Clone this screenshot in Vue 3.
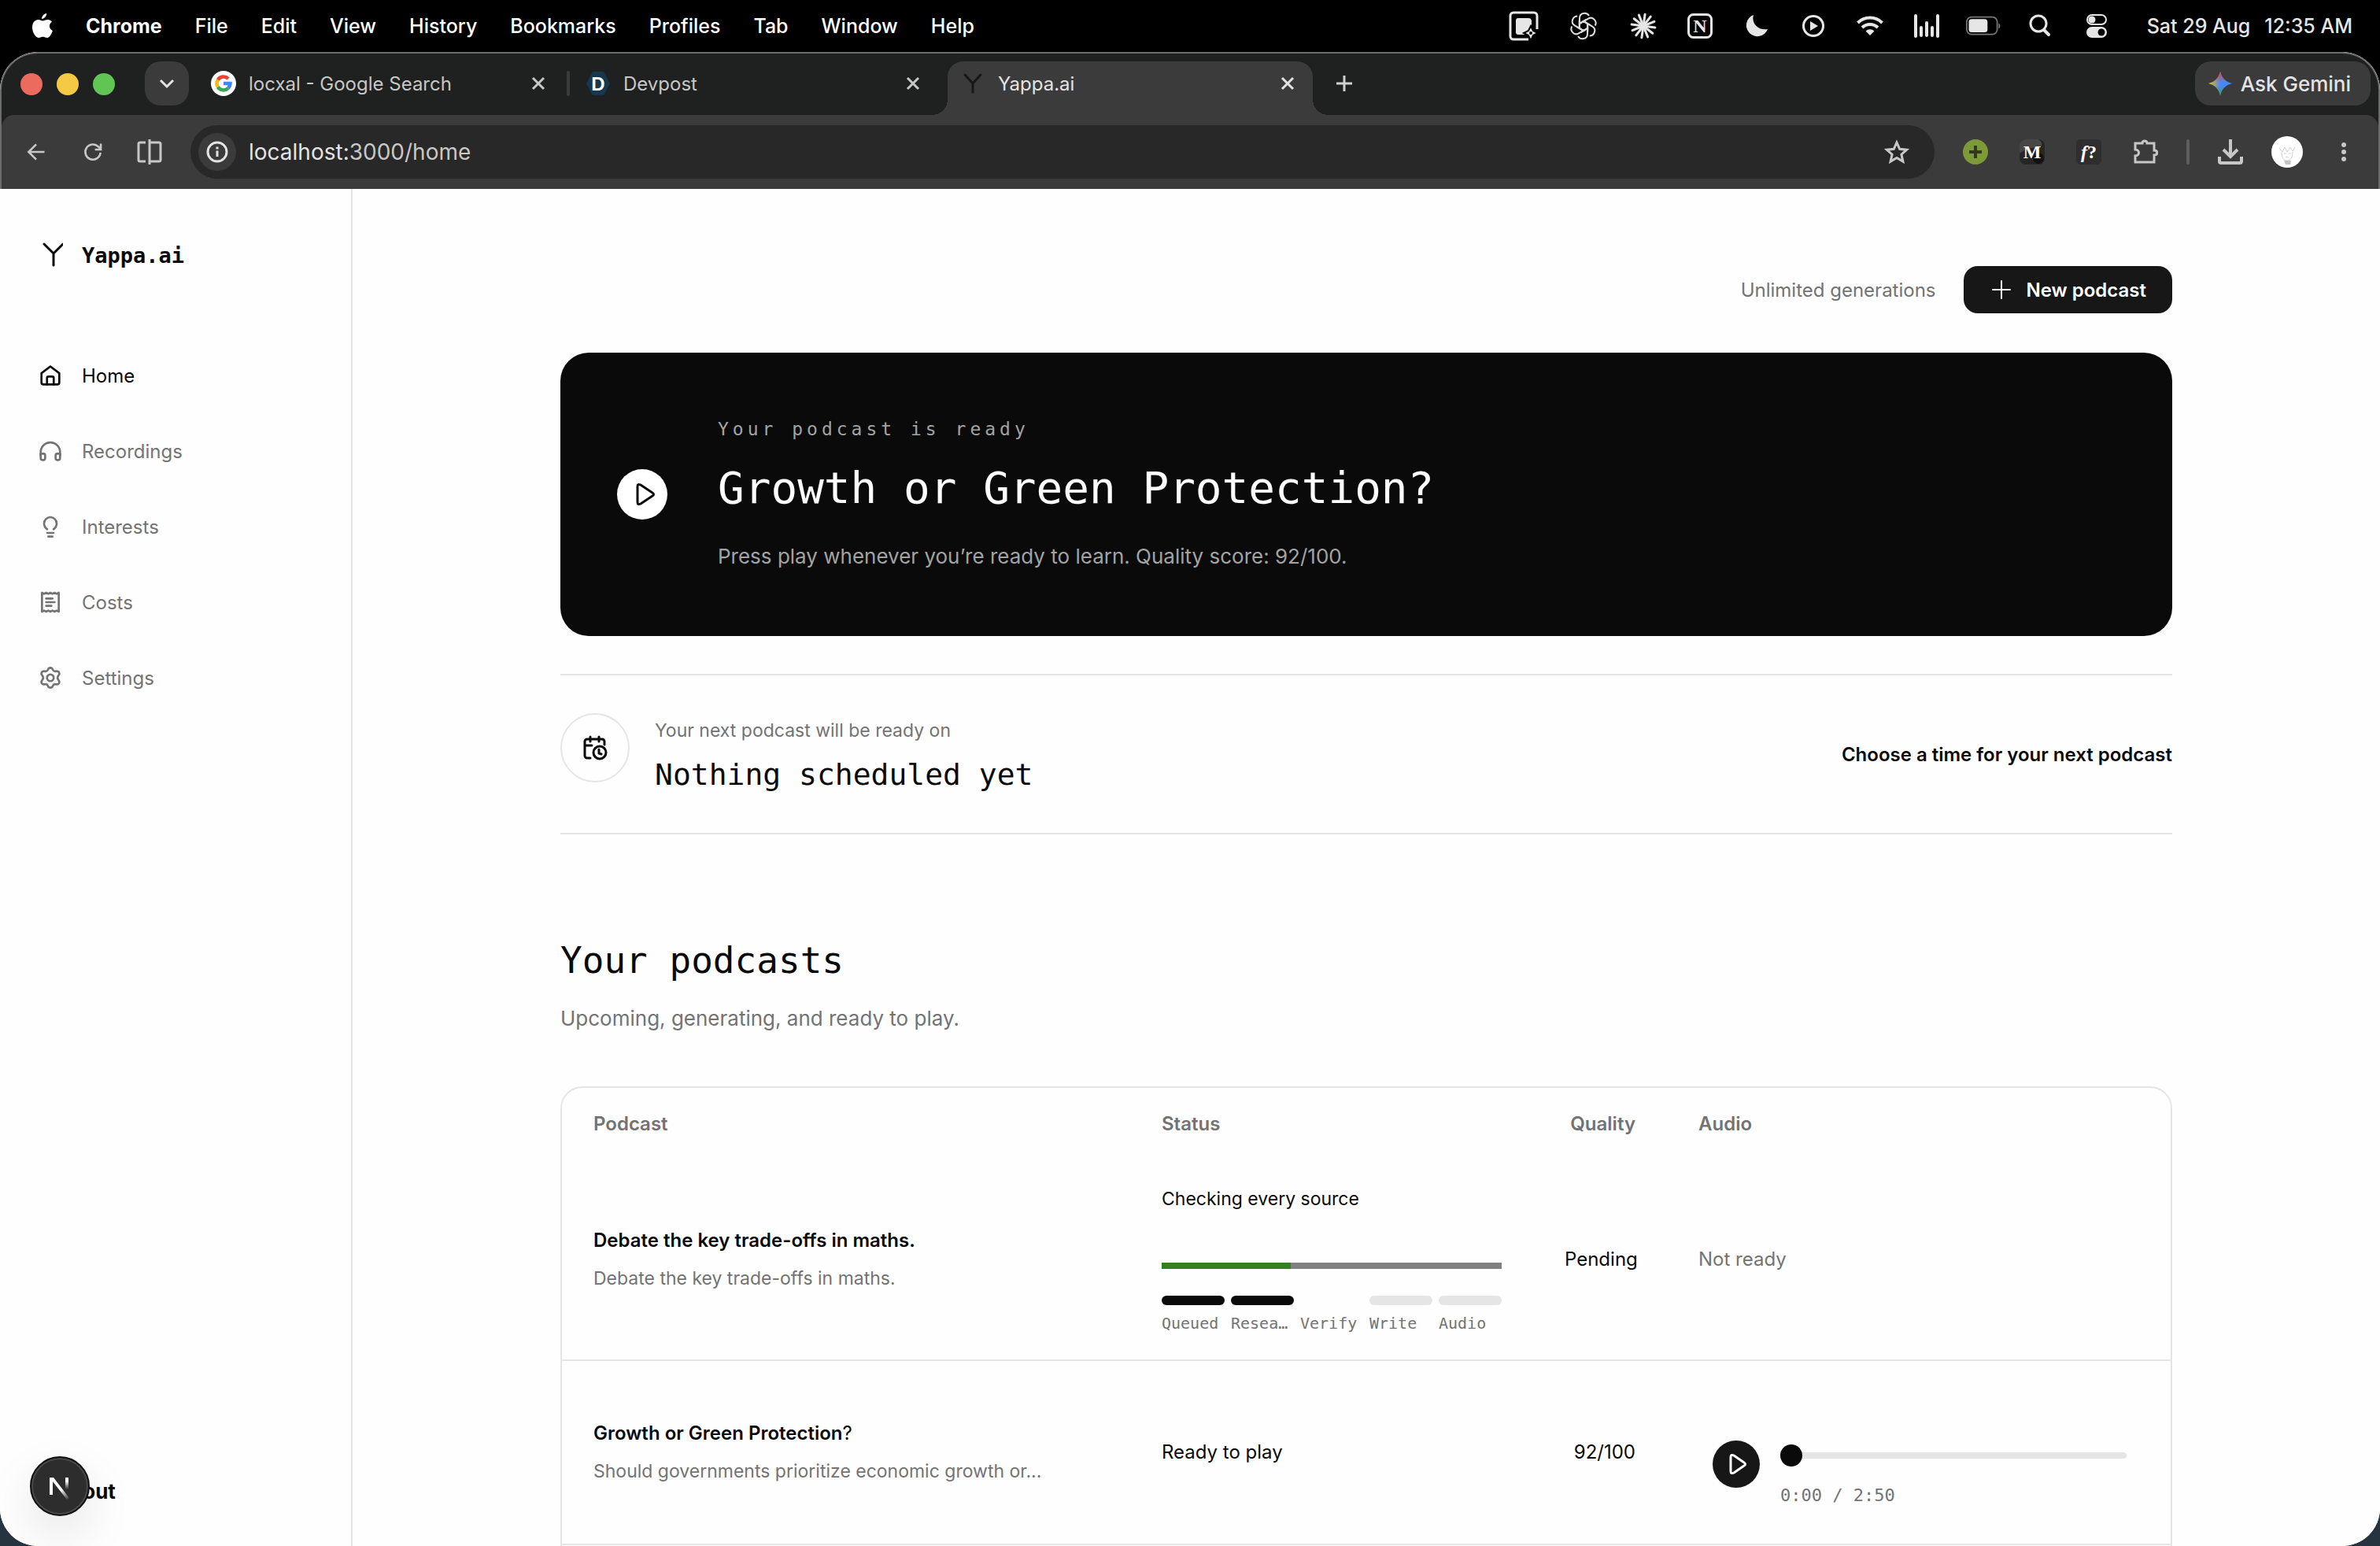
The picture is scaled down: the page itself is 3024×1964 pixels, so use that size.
<script setup>
import { ref } from 'vue'

const menus = ['File', 'Edit', 'View', 'History', 'Bookmarks', 'Profiles', 'Tab', 'Window', 'Help']

const links = [
  { name: 'Home', active: true, paths: ['M3.5 9.8 12 3.4l8.500 6.400V18.500a2 2 0 0 1-2 2h-13a2 2 0 0 1-2-2Z', 'M8.800 20.500v-6a1.500 1.500 0 0 1 1.500-1.500h3.400a1.500 1.500 0 0 1 1.500 1.500v6'] },
  { name: 'Recordings', paths: ['M2.800 17v-4a9.200 9.200 0 0 1 18.400 0v4', 'M2.800 14.500h2.700a1.500 1.500 0 0 1 1.500 1.500v3a1.500 1.500 0 0 1-1.500 1.500H4.300a1.500 1.500 0 0 1-1.500-1.500Z', 'M21.200 14.500h-2.700a1.500 1.500 0 0 0-1.500 1.500v3a1.500 1.500 0 0 0 1.500 1.500h1.200a1.500 1.500 0 0 0 1.500-1.500Z'] },
  { name: 'Interests', paths: ['M9 14.500C7.200 13.200 6 11.200 6 9a6 6 0 0 1 12 0c0 2.200-1.200 4.200-3 5.500', 'M9 18h6', 'M10 21.500h4'] },
  { name: 'Costs', paths: ['M4 3l2 1 2-1 2 1 2-1 2 1 2-1 2 1 2-1v18l-2-1-2 1-2-1-2 1-2-1-2 1-2-1-2 1Z', 'M8 8.500h6', 'M8 12h8', 'M8 15.500h5'] },
  { name: 'Settings', paths: ['M12 2.500c1.600 0 2 .7 2.400 1.900.4 1.100 1.500 1.700 2.700 1.400 1.300-.3 2.300-.3 3.100 1 .8 1.400.4 2.100-.5 3.100a3 3 0 0 0 0 4.200c.9 1 1.300 1.700.5 3.100-.8 1.300-1.800 1.300-3.100 1-1.200-.3-2.300.3-2.700 1.400-.4 1.200-.8 1.900-2.400 1.900s-2-.7-2.400-1.900c-.4-1.100-1.500-1.700-2.700-1.400-1.300.3-2.300.3-3.100-1-.8-1.400-.4-2.100.5-3.100a3 3 0 0 0 0-4.200c-.9-1-1.300-1.700-.5-3.100.8-1.300 1.800-1.300 3.100-1 1.200.3 2.300-.3 2.700-1.400.4-1.200.8-1.900 2.400-1.900Z', 'M8.800 12a3.200 3.200 0 1 0 6.400 0a3.200 3.200 0 1 0-6.400 0'] },
]

const steps = [
  { label: 'Queued', state: 'done' },
  { label: 'Resea…', state: 'done' },
  { label: 'Verify', state: 'current' },
  { label: 'Write', state: 'todo' },
  { label: 'Audio', state: 'todo' },
]

const position = ref(0)
const rays = Array.from({ length: 12 }, (_, i) => i * 30 + 8)
</script>

<template>
  <div class="desktop">
    <div class="menubar">
      <svg class="apple" viewBox="0 0 26 32" aria-hidden="true"><path fill="#fff" d="M18.200 0c.2 3.400-2.900 7-6 6.900C11.800 3.700 15 .3 18.200 0ZM25 10.800c-4.600 2.800-3.800 9.300.9 11.200-1.300 3.900-4 8.900-6.700 9-2.300.1-3-1.300-5.700-1.300S10 31 7.900 31C4 31 0 23.800 0 17.600 0 11.400 3.800 8 7.600 8c2.400 0 4.300 1.500 5.800 1.500S17.300 7.800 20 8c1.700.1 3.700.9 5 2.800Z"/></svg>
      <strong>Chrome</strong>
      <span v-for="m in menus" :key="m">{{ m }}</span>
      <div class="tray">
        <svg class="spaced" viewBox="0 0 44 44"><path fill="none" stroke="#e6e6e6" stroke-width="3" d="M28 39H9a4 4 0 0 1-4-4V9a4 4 0 0 1 4-4h26a4 4 0 0 1 4 4v17"/><path fill="#e6e6e6" d="M15 12h13a4 4 0 0 1 4 4v7l-9 10h-8a3 3 0 0 1-3-3V15a3 3 0 0 1 3-3Z"/><path fill="#e6e6e6" stroke="#000" stroke-width="2" d="m31 22 3 6 6 3-6 3-3 7-3-7-6-3 6-3Z"/><circle cx="31" cy="31" r="2" /></svg>
        <svg class="spaced" viewBox="0 0 44 44"><g fill="none" stroke="#dedede" stroke-width="2"><path v-for="a in 6" :key="a" :transform="`rotate(${a * 60} 22 22)`" d="M17 25V12c0-7 9-8 12-3M17 19l5-3 9 5"/></g></svg>
        <svg viewBox="0 0 44 44"><g stroke="#e6e6e6" stroke-width="3" stroke-linecap="round"><path v-for="r in rays" :key="r" :transform="`rotate(${r} 22 22)`" d="M22 22V7"/></g></svg>
        <svg viewBox="0 0 44 44"><rect x="7.500" y="7.500" width="29" height="29" rx="6" fill="none" stroke="#e6e6e6" stroke-width="3"/><text x="22" y="30" text-anchor="middle" class="slab">N</text></svg>
        <svg viewBox="0 0 44 44"><path fill="#e6e6e6" d="M18 8c-3 10 5 20 18 18a14 14 0 1 1-18-18Z"/></svg>
        <svg viewBox="0 0 44 44"><circle cx="22" cy="22" r="12.500" fill="none" stroke="#e6e6e6" stroke-width="3"/><path fill="#e6e6e6" d="m18 16 10 6-10 6Z"/></svg>
        <svg viewBox="0 0 44 44"><g fill="none" stroke="#e6e6e6" stroke-width="4"><path d="M6.500 18a22 22 0 0 1 31 0M12 24a14.500 14.500 0 0 1 20 0"/></g><path fill="#e6e6e6" d="M16.500 28.500a8 8 0 0 1 11 0L22 34Z"/></svg>
        <svg viewBox="0 0 44 44"><path stroke="#e6e6e6" stroke-width="4" stroke-linecap="round" d="M8 9v26M15 24v10M22 18v16M29 24v10M36 9v26"/></svg>
        <svg viewBox="0 0 50 44"><rect x="1" y="9" width="44" height="25" rx="7" fill="none" stroke="#777" stroke-width="2"/><rect x="4" y="12" width="27" height="19" rx="4" fill="#e6e6e6"/><path fill="#777" d="M47 18c3 1 3 7 0 8Z"/></svg>
        <svg viewBox="0 0 44 44"><circle cx="20" cy="19" r="10" fill="none" stroke="#e6e6e6" stroke-width="3"/><path stroke="#e6e6e6" stroke-width="4" stroke-linecap="round" d="m27 27 6 6"/></svg>
        <svg viewBox="0 0 44 44"><rect x="10" y="8" width="24" height="12" rx="6" fill="none" stroke="#e6e6e6" stroke-width="2"/><circle cx="16" cy="14" r="4.500" fill="#e6e6e6"/><rect x="9" y="23" width="26" height="14" rx="7" fill="#e6e6e6"/><circle cx="28" cy="30" r="4.500"/></svg>
      </div>
      <time class="clock"><span>Sat 29 Aug</span><span>12:35 AM</span></time>
    </div>

    <div class="window">
      <header class="chrome">
        <div class="tabstrip">
          <div class="lights"><i class="red"></i><i class="amber"></i><i class="green"></i></div>
          <button class="tabsearch" aria-label="Search tabs"><svg width="20" height="20" viewBox="0 0 20 20"><path fill="none" stroke="#e3e3e3" stroke-width="3" d="m2 6 8 8 8-8"/></svg></button>
          <div class="tab">
            <svg width="32" height="32" viewBox="0 0 32 32"><circle cx="16" cy="16" r="16" fill="#fff"/><g fill="none" stroke-width="4.500"><path stroke="#ea4335" d="M8.800 11.500a8.500 8.500 0 0 1 13.200-1.500"/><path stroke="#fbbc05" d="M8.800 11.500a8.500 8.500 0 0 0 0 9"/><path stroke="#34a853" d="M8.800 20.500a8.500 8.500 0 0 0 13 1.600"/><path stroke="#4285f4" d="M21.800 22.100A8.500 8.500 0 0 0 24.500 16H16"/></g></svg>
            <span class="title">locxal - Google Search</span>
            <button class="close" aria-label="Close tab"><svg width="18" height="18" viewBox="0 0 18 18"><path stroke="currentColor" stroke-width="3" d="m2 2 14 14M16 2 2 16"/></svg></button>
          </div>
          <i class="sep"></i>
          <div class="tab">
            <svg width="32" height="32" viewBox="0 0 32 32"><path fill="#15384f" d="M9 1h14l8 15-8 15H9L1 16Z"/><text x="16" y="25" text-anchor="middle" class="dev">D</text></svg>
            <span class="title">Devpost</span>
            <button class="close" aria-label="Close tab"><svg width="18" height="18" viewBox="0 0 18 18"><path stroke="currentColor" stroke-width="3" d="m2 2 14 14M16 2 2 16"/></svg></button>
          </div>
          <div class="tab active">
            <svg width="32" height="32" viewBox="0 0 32 32"><path fill="none" stroke="#171717" stroke-width="3" stroke-linecap="round" d="m6 5 10 11L26 5M16 16v11"/></svg>
            <span class="title">Yappa.ai</span>
            <button class="close" aria-label="Close tab"><svg width="18" height="18" viewBox="0 0 18 18"><path stroke="currentColor" stroke-width="3" d="m2 2 14 14M16 2 2 16"/></svg></button>
          </div>
          <button class="newtab" aria-label="New tab"><svg width="22" height="22" viewBox="0 0 22 22"><path stroke="#d0d0d0" stroke-width="3" d="M11 1v20M1 11h20"/></svg></button>
          <button class="gemini">
            <svg width="30" height="30" viewBox="0 0 30 30"><defs>
              <linearGradient id="gemA" x1="0" y1="0.500" x2="1" y2="0.500"><stop offset="0" stop-color="#fbbc05"/><stop offset=".5" stop-color="#4b86f6"/><stop offset="1" stop-color="#4285f4"/></linearGradient>
              <linearGradient id="gemB" x1="0" y1="0" x2="0" y2="1"><stop offset="0" stop-color="#ea4335"/><stop offset=".45" stop-color="#ea4335" stop-opacity="0"/><stop offset=".6" stop-color="#34a853" stop-opacity="0"/><stop offset="1" stop-color="#34a853"/></linearGradient></defs>
              <path fill="url(#gemA)" d="M15 0c2 8 7 13 15 15-8 2-13 7-15 15C13 22 8 17 0 15 8 13 13 8 15 0Z"/><path fill="url(#gemB)" d="M15 0c2 8 7 13 15 15-8 2-13 7-15 15C13 22 8 17 0 15 8 13 13 8 15 0Z"/></svg>
            Ask Gemini
          </button>
        </div>

        <div class="toolbar">
          <button class="tool" aria-label="Back"><svg viewBox="0 0 32 32"><path d="M28 16H5M16 5 5 16l11 11"/></svg></button>
          <button class="tool" aria-label="Reload"><svg viewBox="0 0 32 32"><path d="M27 17a11 11 0 1 1-3-8.500l3 3M27.500 4v8.500H19"/></svg></button>
          <button class="tool" aria-label="Split view"><svg viewBox="0 0 32 32"><path d="M11 4H4a2 2 0 0 0-2 2v20a2 2 0 0 0 2 2h7M16 0v32M16 4h12a2 2 0 0 1 2 2v20a2 2 0 0 1-2 2H16"/></svg></button>
          <div class="omnibox">
            <span class="info"><svg width="28" height="28" viewBox="0 0 28 28"><circle cx="14" cy="14" r="12" fill="none" stroke="#e3e3e3" stroke-width="3"/><path stroke="#e3e3e3" stroke-width="3" d="M14 12.500V20M14 7.500v3"/></svg></span>
            <a href="#" class="url"><b>localhost:</b>3000/home</a>
            <button class="tool" aria-label="Bookmark"><svg viewBox="0 0 32 32"><path d="m16 4 3.700 8.300 9 .9-6.800 6 2 8.900L16 23.500l-7.900 4.600 2-8.900-6.800-6 9-.9Z"/></svg></button>
          </div>
          <button class="tool" aria-label="Add extension"><svg viewBox="0 0 32 32"><circle cx="16" cy="16" r="16" fill="#7c9b38" stroke="none"/><path stroke="#33391f" stroke-width="4" d="M16 8v16M8 16h16"/></svg></button>
          <button class="tool" aria-label="M extension"><svg viewBox="0 0 32 32"><rect width="32" height="32" rx="8" fill="#262626" stroke="none"/><path fill="#474747" stroke="none" d="M8 0h16c6 4 5 8 1 12-9-3-17 0-25 6V8a8 8 0 0 1 8-8Z"/><circle cx="24" cy="24" r="7" fill="#121212" stroke="none"/><text x="16" y="24" text-anchor="middle" class="slab white">M</text></svg></button>
          <button class="tool" aria-label="Font finder"><svg viewBox="0 0 32 32"><rect width="32" height="32" rx="5" fill="#2e2e2e" stroke="none"/><text x="16" y="24" text-anchor="middle" class="slab white"><tspan font-style="italic">f</tspan>?</text></svg></button>
          <button class="tool" aria-label="Extensions"><svg viewBox="0 0 32 32"><path d="M3 5h9c0-4 6-4 6 0h9v9c5 0 5 6 0 6v9H3v-8c6 0 6-8 0-8Z"/></svg></button>
          <i class="bar"></i>
          <button class="tool" aria-label="Downloads"><svg viewBox="0 0 32 32"><path stroke-width="4" d="M16 0v22M7 13l9 9 9-9M2 22v6a2 2 0 0 0 2 2h24a2 2 0 0 0 2-2v-6"/></svg></button>
          <button class="tool" aria-label="Profile"><svg class="avatar" viewBox="0 0 40 40"><circle cx="20" cy="20" r="20" fill="#fff" stroke="none"/><path stroke="#cfcfcf" stroke-width="1" d="m10 15 4 5 3-6 3 6 4-6 3 5 3-5M13 20c0 8 3 11 7 11s7-3 7-11M16 22h3M22 22h3M18 27l2-1 2 1"/><path fill="#c4c4c4" stroke="none" d="M16 31h9l-1 5h-6Z"/></svg></button>
          <button class="tool" aria-label="Menu"><svg viewBox="0 0 32 32"><g fill="#c7c7c7" stroke="none"><circle cx="16" cy="7" r="3"/><circle cx="16" cy="16" r="3"/><circle cx="16" cy="25" r="3"/></g></svg></button>
        </div>
      </header>

      <div class="app">
        <aside class="sidebar">
          <a href="#" class="brand">
            <svg width="32" height="32" viewBox="0 0 32 32"><path fill="none" stroke="#0a0a0a" stroke-width="3" stroke-linecap="round" d="m8 2 12 12L32 2M20 14v15"/></svg>
            Yappa.ai
          </a>
          <nav>
            <a v-for="l in links" :key="l.name" href="#" :class="{ on: l.active }">
              <svg width="32" height="32" viewBox="0 0 24 24"><path v-for="p in l.paths" :key="p" :d="p"/></svg>
              {{ l.name }}
            </a>
          </nav>
          <button class="logout">Log out</button>
          <button class="devtools" aria-label="Open Next.js dev tools">
            <svg width="76" height="76" viewBox="0 0 76 76"><defs>
              <linearGradient id="nA" x1="0" y1="0" x2="0" y2="1"><stop offset=".3" stop-color="#fff"/><stop offset="1" stop-color="#fff" stop-opacity="0"/></linearGradient>
              <linearGradient id="nB" gradientUnits="userSpaceOnUse" x1="40" y1="42" x2="50" y2="55"><stop offset="0" stop-color="#fff"/><stop offset="1" stop-color="#fff" stop-opacity="0"/></linearGradient></defs>
              <path fill="#fff" d="M25 27h4v22h-4Z"/><path fill="url(#nB)" d="M25 27h5l20 26-3 2Z"/><path fill="url(#nA)" d="M45 27h4v15h-4Z"/></svg>
          </button>
        </aside>

        <main>
          <div class="wrap">
            <div class="actions">
              <span>Unlimited generations</span>
              <button class="new"><svg width="24" height="24" viewBox="0 0 24 24"><path stroke="#fff" stroke-width="2" stroke-linecap="round" d="M12 1v22M1 12h22"/></svg>New podcast</button>
            </div>

            <section class="hero">
              <button class="heroplay" aria-label="Play podcast"><svg width="32" height="32" viewBox="0 0 32 32"><path fill="none" stroke="#0a0a0a" stroke-width="3" stroke-linejoin="round" d="M9 6c0-3 2-3 4-2l15 10c2 1 2 3 0 4L13 28c-2 1-4 1-4-2Z"/></svg></button>
              <div>
                <p class="eyebrow">Your podcast is ready</p>
                <h1>Growth or Green Protection?</h1>
                <p class="lead">Press play whenever you’re ready to learn. Quality score: 92/100.</p>
              </div>
            </section>

            <section class="schedule">
              <span class="cal"><svg width="32" height="32" viewBox="0 0 32 32"><g fill="none" stroke="#0a0a0a" stroke-width="3" stroke-linecap="round" stroke-linejoin="round"><path d="M10 29H6a3 3 0 0 1-3-3V8a3 3 0 0 1 3-3h19a3 3 0 0 1 3 3v4M3 13h9M10 2v6M21 2v6"/><circle cx="22" cy="22" r="8"/><path d="M21 18v5l3 1"/></g></svg></span>
              <div class="when">
                <p>Your next podcast will be ready on</p>
                <h2>Nothing scheduled yet</h2>
              </div>
              <a href="#">Choose a time for your next podcast</a>
            </section>

            <h2 class="heading">Your podcasts</h2>
            <p class="sub">Upcoming, generating, and ready to play.</p>

            <div class="card">
              <table>
                <colgroup><col><col class="c-status"><col class="c-quality"><col class="c-audio"></colgroup>
                <thead><tr><th>Podcast</th><th>Status</th><th class="right">Quality</th><th>Audio</th></tr></thead>
                <tbody>
                  <tr class="generating">
                    <td><strong>Debate the key trade-offs in maths.</strong><p>Debate the key trade-offs in maths.</p></td>
                    <td>
                      <label class="state" for="build">Checking every source</label>
                      <progress id="build" value="38" max="100"></progress>
                      <ol class="steps"><li v-for="s in steps" :key="s.label" :class="s.state">{{ s.label }}</li></ol>
                    </td>
                    <td class="right">Pending</td>
                    <td class="muted">Not ready</td>
                  </tr>
                  <tr class="ready">
                    <td><strong>Growth or Green Protection</strong>?<p>Should governments prioritize economic growth or...</p></td>
                    <td>Ready to play</td>
                    <td class="right">92/100</td>
                    <td>
                      <div class="player">
                        <button class="play" aria-label="Play"><svg width="32" height="32" viewBox="0 0 32 32"><path fill="none" stroke="#fff" stroke-width="3" stroke-linejoin="round" d="M8 7c0-3 2-3 4-2l13 9c2 1 2 3 0 4l-13 9c-2 1-4 1-4-2Z"/></svg></button>
                        <div class="track">
                          <input v-model="position" type="range" min="0" max="170" aria-label="Playback position">
                          <span>0:00 / 2:50</span>
                        </div>
                      </div>
                    </td>
                  </tr>
                </tbody>
              </table>
            </div>
          </div>
        </main>
      </div>
    </div>
  </div>
</template>

<style>
html, body { margin: 0; background: #26343f; }
</style>

<style scoped>
* { box-sizing: border-box; }
.desktop { height: 100vh; overflow: hidden; display: flex; flex-direction: column; background: linear-gradient(#000 50%, #26343f 50%); font-family: Inter, "Liberation Sans", sans-serif; font-size: 24px; color: #0a0a0a; }
button { font: inherit; border: 0; padding: 0; background: none; color: inherit; display: flex; align-items: center; justify-content: center; }
a { color: inherit; text-decoration: none; }
p, h1, h2, ol { margin: 0; }
svg { display: block; flex: none; }

.menubar { flex: none; height: 66px; padding: 0 35px 0 41px; display: flex; align-items: center; gap: 42px; color: #fff; font-size: 25px; font-weight: 500; background: #000; white-space: nowrap; }
.menubar strong { font-weight: 700; }
.apple { width: 26px; height: 32px; }
.tray { margin-left: auto; display: flex; gap: 28px; }
.tray svg { width: 44px; height: 44px; }
.tray .spaced { margin-right: 4px; }
.clock { display: flex; gap: 18px; color: #e6e6e6; }
.slab { font: bold 24px "Liberation Serif", serif; fill: #e6e6e6; stroke: none; }
.slab.white { fill: #fff; }
.dev { font: bold 24px "Liberation Sans", sans-serif; fill: #fff; }

.window { flex: 1; min-height: 0; display: flex; flex-direction: column; border-radius: 48px; overflow: hidden; background: #fff; }
.chrome { flex: none; border: 2px solid #6c6c6c; border-bottom: 0; border-radius: 48px 48px 0 0; background: #1f2120; overflow: hidden; }
.tabstrip { height: 78px; display: flex; align-items: flex-start; padding: 10px 10px 0 24px; }
.lights { display: flex; gap: 18px; margin-top: 15px; }
.lights i { width: 28px; height: 28px; border-radius: 50%; }
.red { background: #ed6a5f; }
.amber { background: #f5c944; }
.green { background: #61c554; }
.tabsearch { width: 56px; height: 56px; margin: 0 12px 0 38px; border-radius: 20px; background: #3b3b3b; }
.tab { width: 464px; height: 68px; margin-right: 12px; padding: 0 16px 12px; display: flex; align-items: center; gap: 16px; color: #c7c7c7; position: relative; }
.tab .title { flex: 1; white-space: nowrap; }
.close { width: 32px; height: 32px; }
.sep { width: 4px; height: 32px; margin: 12px 4px 0 -8px; background: #3b3b3b; border-radius: 2px; }
.active { background: #3b3b3b; border-radius: 20px 20px 0 0; color: #e3e3e3; }
.active::before, .active::after { content: ""; position: absolute; bottom: 0; width: 20px; height: 20px; }
.active::before { right: 100%; background: radial-gradient(circle at 0 0, transparent 20px, #3b3b3b 20px); }
.active::after { left: 100%; background: radial-gradient(circle at 100% 0, transparent 20px, #3b3b3b 20px); }
.newtab { width: 56px; height: 56px; }
.gemini { height: 56px; margin-left: auto; padding: 0 25px 0 17px; gap: 11px; border-radius: 20px; background: #3b3b3b; color: #e3e3e3; font-size: 26px; font-weight: 500; }
.toolbar { height: 94px; padding: 0 20px; display: flex; align-items: center; gap: 24px; background: #3b3b3b; border-radius: 16px 16px 0 0; }
.tool { width: 48px; height: 48px; flex: none; }
.tool svg { width: 32px; height: 32px; fill: none; stroke: #c7c7c7; stroke-width: 3; }
.tool:nth-child(-n+2) svg { width: 28px; height: 28px; }
.tool .avatar { width: 40px; height: 40px; }
.omnibox { flex: 1; height: 68px; margin: 0 4px; padding: 0 24px 0 10px; display: flex; align-items: center; gap: 16px; border-radius: 34px; background: #282828; color: #c7c7c7; font-size: 28px; }
.info { width: 48px; height: 48px; border-radius: 50%; background: #3b3b3b; display: flex; align-items: center; justify-content: center; }
.url { flex: 1; }
.url b { font-weight: 400; color: #e3e3e3; }
.bar { width: 4px; height: 32px; margin: 0 4px; border-radius: 2px; background: #5e5e5e; }

.app { flex: 1; min-height: 0; display: flex; background: #fefefe; }
.sidebar { width: 448px; flex: none; border-right: 2px solid #e5e5e5; padding: 64px 48px 50px; display: flex; flex-direction: column; align-items: flex-start; position: relative; }
.brand { display: flex; align-items: center; gap: 24px; height: 40px; font: bold 27px "DejaVu Sans Mono", monospace; }
nav { margin-top: 113px; display: flex; flex-direction: column; gap: 56px; color: #737373; }
nav a { display: flex; align-items: center; gap: 24px; height: 40px; }
nav svg { fill: none; stroke: currentColor; stroke-width: 2; stroke-linecap: round; stroke-linejoin: round; }
nav .on { color: #0a0a0a; }
.logout { margin-top: auto; height: 40px; padding-left: 4px; font-weight: 700; font-size: 26px; }
.devtools { position: absolute; left: 38px; bottom: 38px; width: 76px; height: 76px; border-radius: 50%; background: #2d2d2d; border: 2px solid #111; box-shadow: inset 0 0 0 2px #4a4a4a, 0 24px 60px rgba(0, 0, 0, .1); }

main { flex: 1; min-width: 0; padding: 98px 48px 0; }
.wrap { max-width: 2048px; margin: 0 auto; }
.actions { height: 60px; display: flex; align-items: center; justify-content: flex-end; gap: 35px; color: #737373; }
.new { height: 60px; padding: 0 33px 0 36px; gap: 20px; border-radius: 18px; background: #171717; color: #fff; font-weight: 600; }
.hero { height: 360px; margin-top: 50px; padding: 0 72px; display: flex; align-items: center; gap: 64px; border-radius: 36px; background: #0a0a0a; color: #fff; }
.heroplay { width: 64px; height: 64px; padding-left: 2px; border-radius: 50%; background: #fff; }
.eyebrow { font: 23px/30px "DejaVu Sans Mono", monospace; letter-spacing: 5px; color: #a3a3a3; }
h1 { margin: 24px 0 31px; font: 56px/72px "DejaVu Sans Mono", monospace; }
.lead { font-size: 26px; line-height: 40px; color: #a3a3a3; }
.schedule { height: 204px; margin-top: 48px; padding-top: 48px; display: flex; align-items: flex-start; border-top: 2px solid #e5e5e5; border-bottom: 2px solid #e5e5e5; }
.cal { width: 88px; height: 88px; margin-right: 32px; border: 2px solid #e5e5e5; border-radius: 50%; display: flex; align-items: center; justify-content: center; }
.when { flex: 1; }
.when p { font-size: 23px; line-height: 44px; color: #737373; }
.when h2 { margin-top: 8px; font: 38px/52px "DejaVu Sans Mono", monospace; }
.schedule a { line-height: 106px; font-weight: 600; }
.heading { margin-top: 130px; font: 46px/60px "DejaVu Sans Mono", monospace; }
.sub { margin-top: 24px; font-size: 26px; line-height: 40px; color: #737373; }

.card { margin-top: 66px; padding-bottom: 96px; border: 2px solid #e5e5e5; border-radius: 28px; }
table { width: 100%; table-layout: fixed; border-collapse: separate; border-spacing: 0; }
.c-status { width: 512px; }
.c-quality { width: 170px; }
.c-audio { width: 640px; }
th { height: 91px; padding: 0 40px; text-align: left; font-weight: 600; color: #737373; }
td { padding: 0 40px; line-height: 48px; vertical-align: middle; border-bottom: 2px solid #e5e5e5; white-space: nowrap; }
td strong { font-weight: 600; }
td p, .muted { color: #737373; }
td p, .state { font-size: 23px; }
.right { text-align: right; }
.generating td { height: 256px; }
.ready td { height: 234px; }
.state { display: block; line-height: 40px; }
progress { display: block; appearance: none; width: 100%; height: 8px; margin: 61px 0 34px; border: 0; background: #808080; }
progress::-webkit-progress-bar { background: #808080; }
progress::-webkit-progress-value { background: #357f21; }
.steps { display: grid; grid-template-columns: repeat(5, 1fr); gap: 8px; padding: 0 0 4px; list-style: none; font: 20px/24px "DejaVu Sans Mono", monospace; color: #737373; }
.steps li::before { content: ""; display: block; height: 12px; margin-bottom: 11px; border-radius: 6px; }
.done::before { background: #0a0a0a; }
.todo::before { background: #e5e5e5; }
.player { display: flex; align-items: flex-start; gap: 26px; padding: 54px 16px 0 18px; }
.play { width: 60px; height: 60px; padding-left: 2px; border-radius: 50%; background: #171717; flex: none; }
.track { flex: 1; padding-top: 5px; display: flex; flex-direction: column; gap: 23px; font: 22px/28px "DejaVu Sans Mono", monospace; color: #737373; }
input[type="range"] { appearance: none; width: 100%; height: 28px; margin: 0; background: none; }
input[type="range"]::-webkit-slider-runnable-track { height: 8px; border-radius: 4px; background: #e5e5e5; }
input[type="range"]::-webkit-slider-thumb { appearance: none; width: 28px; height: 28px; margin-top: -10px; border-radius: 50%; background: #0a0a0a; }
</style>
